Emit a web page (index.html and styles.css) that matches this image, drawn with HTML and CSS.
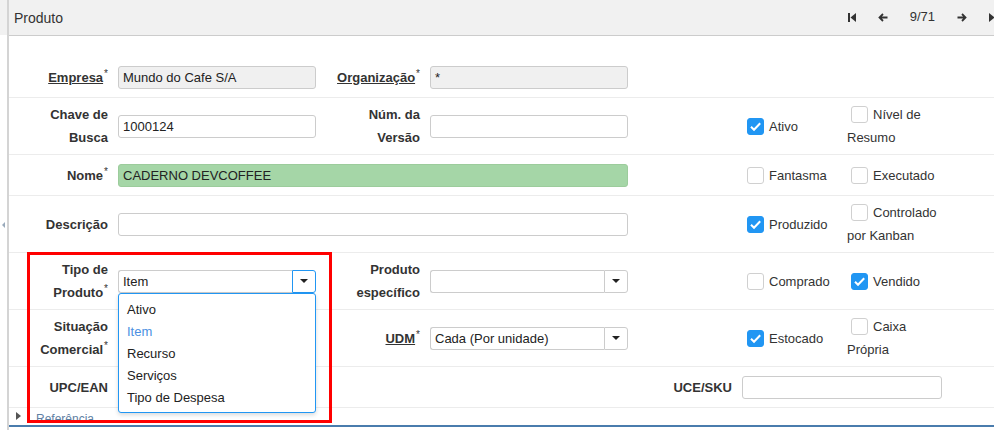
FILE: index.html
```html
<!DOCTYPE html>
<html lang="pt">
<head>
<meta charset="utf-8">
<title>Produto</title>
<link rel="stylesheet" href="styles.css">
</head>
<body>
<div class="app">
  <div class="strip"><span class="handle"></span></div>
  <div class="panel">
    <div class="hdr">
      <span class="title">Produto</span>
      <div class="nav">
        <svg width="8" height="9" viewBox="0 0 8 9"><rect x="0" y="0" width="2" height="9" fill="#333"/><polygon points="8,0 2.5,4.5 8,9" fill="#333"/></svg>
        <svg width="10" height="9" viewBox="0 0 10 9"><path d="M9.5 4.5H1.5M5 1L1.5 4.5L5 8" fill="none" stroke="#333" stroke-width="1.8"/></svg>
        <span class="count">9/71</span>
        <svg width="10" height="9" viewBox="0 0 10 9"><path d="M0.5 4.5H8.5M5 1L8.5 4.5L5 8" fill="none" stroke="#333" stroke-width="1.8"/></svg>
        <svg width="8" height="9" viewBox="0 0 8 9"><polygon points="0,0 5.5,4.5 0,9" fill="#333"/><rect x="6" y="0" width="2" height="9" fill="#333"/></svg>
      </div>
    </div>

    <div class="form">
      <div class="row">
        <div class="lbl"><u>Empresa</u><sup>*</sup></div>
        <div class="inp ro">Mundo do Cafe S/A</div>
        <div class="lbl"><u>Organização</u><sup>*</sup></div>
        <div class="inp ro">*</div>
      </div>

      <div class="row">
        <div class="lbl">Chave de<br>Busca</div>
        <div class="inp">1000124</div>
        <div class="lbl">Núm. da<br>Versão</div>
        <div class="inp"></div>
        <div class="chk">
          <label class="cb1"><span class="cb on"></span>Ativo</label>
          <label class="cb2"><span class="cb"></span>Nível de Resumo</label>
        </div>
      </div>

      <div class="row">
        <div class="lbl">Nome<sup>*</sup></div>
        <div class="inp green span3">CADERNO DEVCOFFEE</div>
        <div class="chk">
          <label class="cb1"><span class="cb"></span>Fantasma</label>
          <label class="cb2"><span class="cb"></span>Executado</label>
        </div>
      </div>

      <div class="row">
        <div class="lbl">Descrição</div>
        <div class="inp span3"></div>
        <div class="chk">
          <label class="cb1"><span class="cb on"></span>Produzido</label>
          <label class="cb2"><span class="cb"></span>Controlado por Kanban</label>
        </div>
      </div>

      <div class="row">
        <div class="lbl">Tipo de<br>Produto<sup>*</sup></div>
        <div class="cell">
          <div class="combo focus">
            <div class="val">Item</div>
            <div class="btn"><span class="caret"></span></div>
          </div>
          <ul class="dd">
            <li>Ativo</li>
            <li class="sel">Item</li>
            <li>Recurso</li>
            <li>Serviços</li>
            <li>Tipo de Despesa</li>
          </ul>
        </div>
        <div class="lbl">Produto<br>específico</div>
        <div class="combo">
          <div class="val"></div>
          <div class="btn"><span class="caret"></span></div>
        </div>
        <div class="chk">
          <label class="cb1"><span class="cb"></span>Comprado</label>
          <label class="cb2"><span class="cb on"></span>Vendido</label>
        </div>
      </div>

      <div class="row">
        <div class="lbl">Situação<br>Comercial<sup>*</sup></div>
        <div class="combo">
          <div class="val"></div>
          <div class="btn"><span class="caret"></span></div>
        </div>
        <div class="lbl"><u>UDM</u><sup>*</sup></div>
        <div class="combo">
          <div class="val">Cada (Por unidade)</div>
          <div class="btn"><span class="caret"></span></div>
        </div>
        <div class="chk">
          <label class="cb1"><span class="cb on"></span>Estocado</label>
          <label class="cb2"><span class="cb"></span>Caixa Própria</label>
        </div>
      </div>

      <div class="row">
        <div class="lbl">UPC/EAN</div>
        <div class="inp"></div>
        <div class="lbl col5">UCE/SKU</div>
        <div class="inp"></div>
      </div>

      <div class="sec">
        <span class="tri"></span>
        <span class="sec-t">Referência</span>
      </div>
    </div>
  </div>
  <div class="annot"></div>
</div>
</body>
</html>
```

FILE: styles.css
```css
* { box-sizing: border-box; }
html, body { margin: 0; height: 100%; overflow: hidden; }
body {
  font-family: "Liberation Sans", Arial, sans-serif;
  font-size: 13px;
  color: #333;
  background: #fff;
}
.app { display: flex; height: 430px; position: relative; }
.strip {
  width: 7px;
  flex: none;
  background: linear-gradient(#f1f1f1 0 35px, #fff 35px);
  padding-top: 222px;
}
.handle {
  display: block;
  width: 0; height: 0;
  margin-left: 2px;
  border-top: 3px solid transparent;
  border-bottom: 3px solid transparent;
  border-right: 3px solid #9ab;
}
.panel { flex: 1; min-width: 0; border-left: 2px solid #d4d4d4; }

.hdr {
  height: 36px;
  background: #f1f1f1;
  border-bottom: 1px solid #ccc;
  display: flex;
  align-items: center;
  padding-left: 5px;
}
.title { flex: 1; font-size: 14px; color: #333; }
.nav { display: flex; align-items: center; gap: 22px; margin-right: -3px; }
.nav svg { display: block; }
.count { color: #333; margin-top: -2px; }

.form { padding-top: 21px; }
.row {
  display: grid;
  grid-template-columns: 109px 198px 114px 198px 114px 200px;
  align-items: center;
  min-height: 41px;
  padding: 5px 0;
  border-bottom: 1px solid #ececec;
}
.lbl {
  text-align: right;
  padding-right: 10px;
  font-weight: bold;
  line-height: 23px;
  color: #333;
}
.lbl u { text-decoration: underline; }
.lbl sup {
  font-size: 10px;
  font-weight: normal;
  color: #333;
  vertical-align: 5px;
  line-height: 0;
  margin-left: 1px;
}
.col5 { grid-column: 5; }

.inp {
  height: 23px;
  border: 1px solid #ccc;
  border-radius: 3px;
  padding: 0 4px;
  line-height: 21px;
  color: #222;
  background: #fff;
  white-space: nowrap;
  overflow: hidden;
}
.ro { background: #f0f0f0; }
.green { background: #a5d6a7; border-color: #9ccc9c; }
.span3 { grid-column: 2 / 5; }

.cell { position: relative; }
.combo { display: flex; height: 23px; }
.combo .val {
  flex: 1;
  border: 1px solid #ccc;
  border-right: none;
  border-radius: 3px 0 0 3px;
  padding: 0 4px;
  line-height: 21px;
  color: #222;
  white-space: nowrap;
  overflow: hidden;
}
.combo .btn {
  width: 24px;
  border: 1px solid #ccc;
  border-radius: 0 3px 3px 0;
  display: flex;
  align-items: center;
  justify-content: center;
}
.combo.focus .btn { border-color: #2196f3; }
.caret {
  width: 0; height: 0;
  border-left: 4px solid transparent;
  border-right: 4px solid transparent;
  border-top: 4px solid #222;
}

.dd {
  position: absolute;
  left: 0; right: 0; top: 23px;
  margin: 0;
  padding: 5px 0 3px;
  list-style: none;
  background: #fff;
  border: 1px solid #2196f3;
  border-radius: 3px;
  box-shadow: 0 2px 4px rgba(0,0,0,0.15);
  z-index: 2;
}
.dd li { line-height: 22px; padding-left: 8px; color: #222; }
.dd li.sel { color: #4a90e2; }

.chk {
  grid-column: 6;
  display: grid;
  grid-template-columns: 100px 100px;
  align-items: center;
  color: #333;
  line-height: 23px;
}
.cb1 { display: flex; align-items: center; padding-left: 5px; }
.cb1 .cb { margin-right: 5px; }
.cb2 { display: block; padding-left: 5px; }
.cb2 .cb { margin: 0 5px 0 4px; vertical-align: -4px; }
.cb {
  display: inline-block;
  width: 17px; height: 17px;
  border: 1px solid #d0d0d0;
  border-radius: 3px;
  background: #fff;
  flex: none;
}
.cb.on {
  border-color: #2196f3;
  background: #2196f3 url("data:image/svg+xml,%3Csvg xmlns='http://www.w3.org/2000/svg' width='15' height='15' viewBox='0 0 15 15'%3E%3Cpath d='M3 7.8L6 10.8L12.2 4.2' fill='none' stroke='white' stroke-width='2'/%3E%3C/svg%3E") center / 15px 15px no-repeat;
}

.sec {
  height: 19px;
  padding: 4px 0 0 7px;
  display: flex;
  align-items: flex-start;
  border-bottom: 2px solid #4a7cad;
}
.tri {
  width: 0; height: 0;
  border-top: 4.5px solid transparent;
  border-bottom: 4.5px solid transparent;
  border-left: 5px solid #555;
}
.sec-t {
  margin-left: 15px;
  font-size: 12px;
  line-height: 14px;
  color: #5f80a3;
}

.annot {
  position: absolute;
  left: 27px; top: 252px;
  width: 305px; height: 171px;
  border: 3px solid #f00;
  pointer-events: none;
  z-index: 3;
}
```
